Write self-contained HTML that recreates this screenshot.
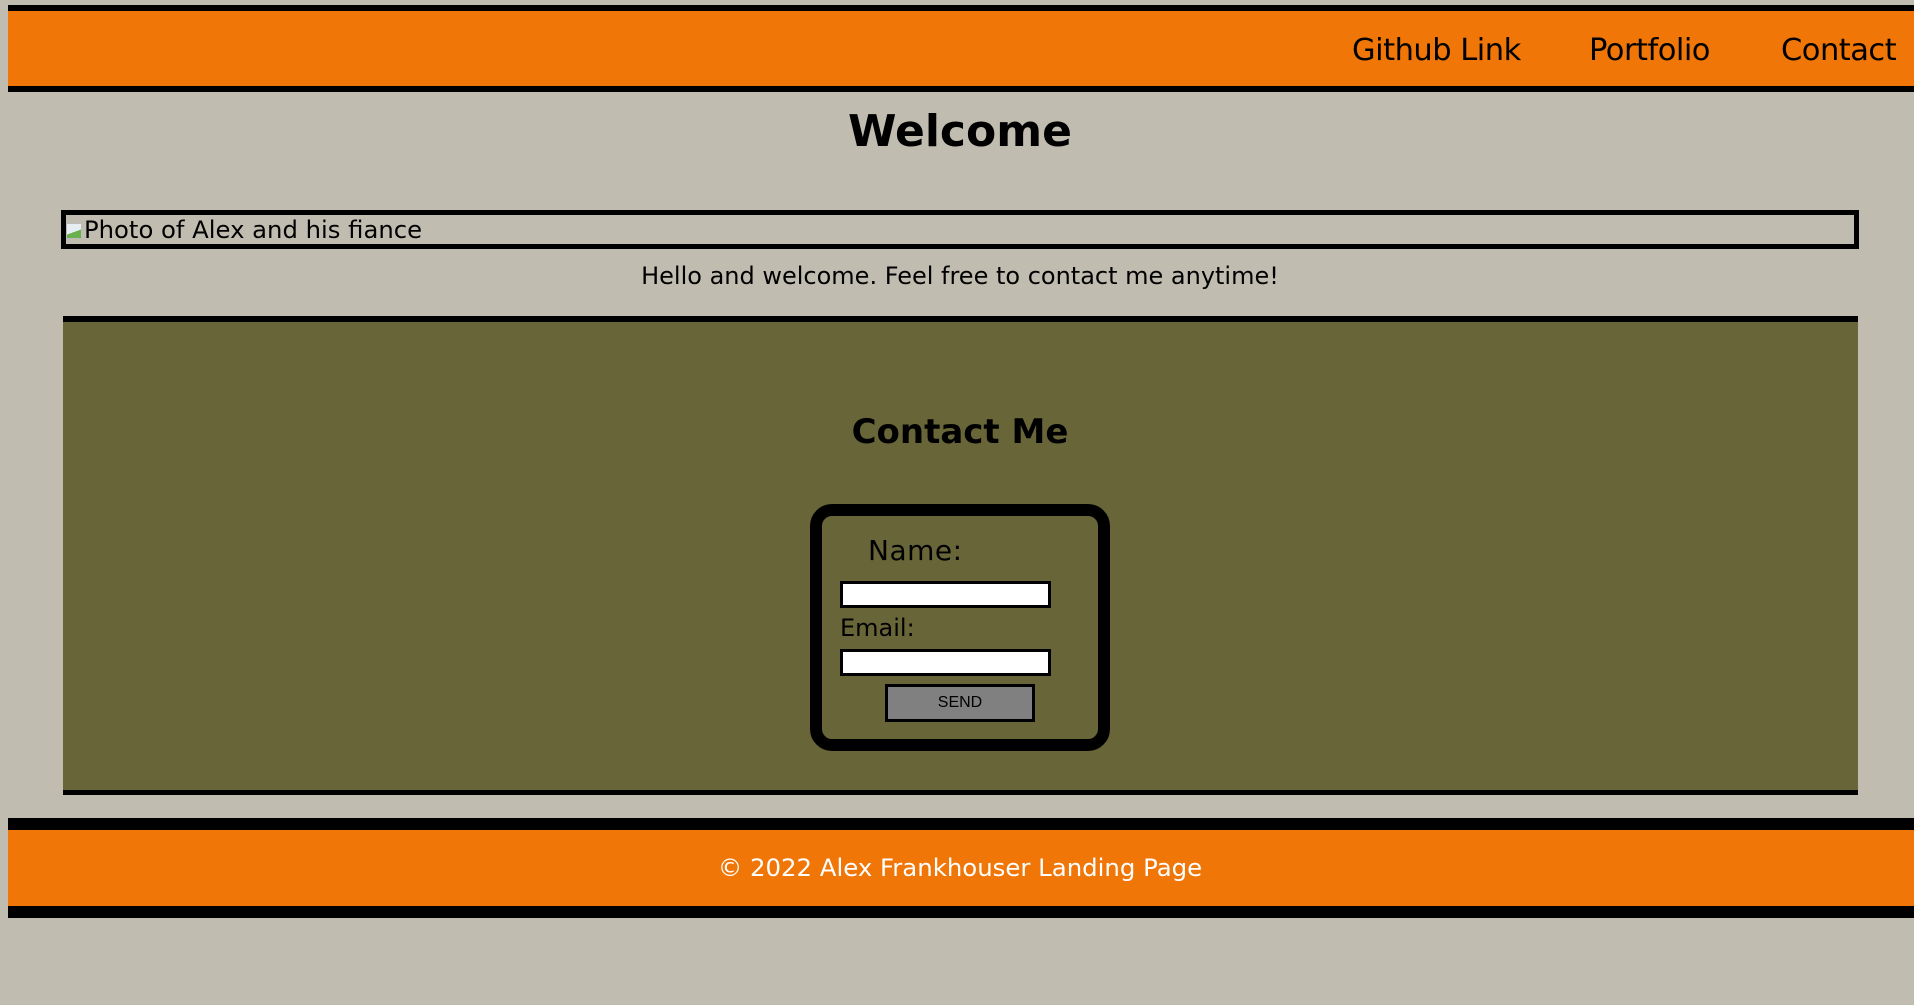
<!DOCTYPE html>
<html><head><style>
html,body{margin:0;padding:0;}
body{width:1914px;height:1005px;background:#c0bdb0;position:relative;overflow:hidden;font-family:"DejaVu Sans","Liberation Sans",sans-serif;color:#000;}
.a{position:absolute;}
.hdr{left:8px;top:5px;width:1906px;height:75px;background:#ef7607;border-top:6px solid #000;border-bottom:6px solid #000;}
.nav{top:31px;font-size:30.5px;letter-spacing:-0.5px;white-space:nowrap;line-height:40px;}
.welcome{left:0;width:1920px;text-align:center;top:105px;font-size:44px;font-weight:bold;line-height:54px;}
.img{left:61px;top:210px;width:1788px;height:29px;border:5px solid #000;font-size:24.3px;line-height:29px;white-space:nowrap;}
.ico{display:inline-block;width:16px;height:16px;vertical-align:-1px;background:linear-gradient(160deg,#e6eef2 55%,#6ab04c 56%);border:1px solid #bbb;box-sizing:border-box;margin-right:2px;}
.p{left:0;width:1920px;text-align:center;top:261px;font-size:24px;line-height:30px;}
.sec{left:63px;top:316px;width:1795px;height:468px;background:#686639;border-top:6px solid #000;border-bottom:5px solid #000;}
.cm{left:0;width:1920px;text-align:center;top:409px;font-size:34px;font-weight:bold;line-height:46px;}
.form{left:810px;top:504px;width:276px;height:223px;border:12px solid #000;border-radius:22px;}
.lbl{white-space:nowrap;}
.inp{background:#fff;border:3px solid #000;box-sizing:border-box;width:211px;height:27px;}
.btn{left:885px;top:684px;width:150px;height:38px;box-sizing:border-box;background:#808080;border:3px solid #000;font-family:"Liberation Sans",sans-serif;font-size:16px;text-align:center;line-height:32px;}
.ftr{left:8px;top:818px;width:1906px;height:76px;background:#ef7607;border-top:12px solid #000;border-bottom:12px solid #000;}
.ft{left:0;width:1920px;text-align:center;top:852px;font-size:24.4px;color:#fff;line-height:32px;}
</style></head><body>
<div class="a hdr"></div>
<div class="a nav" style="left:1352px">Github Link</div>
<div class="a nav" style="left:1589px">Portfolio</div>
<div class="a nav" style="left:1781px">Contact</div>
<div class="a welcome">Welcome</div>
<div class="a img"><span class="ico"></span>Photo of Alex and his fiance</div>
<div class="a p">Hello and welcome. Feel free to contact me anytime!</div>
<div class="a sec"></div>
<div class="a cm">Contact Me</div>
<div class="a form"></div>
<div class="a lbl" style="left:868px;top:533px;font-size:28px;line-height:36px;letter-spacing:0.5px">Name:</div>
<div class="a inp" style="left:840px;top:581px"></div>
<div class="a lbl" style="left:840px;top:613px;font-size:24px;line-height:30px">Email:</div>
<div class="a inp" style="left:840px;top:649px"></div>
<div class="a btn">SEND</div>
<div class="a ftr"></div>
<div class="a ft">© 2022 Alex Frankhouser Landing Page</div>
</body></html>
